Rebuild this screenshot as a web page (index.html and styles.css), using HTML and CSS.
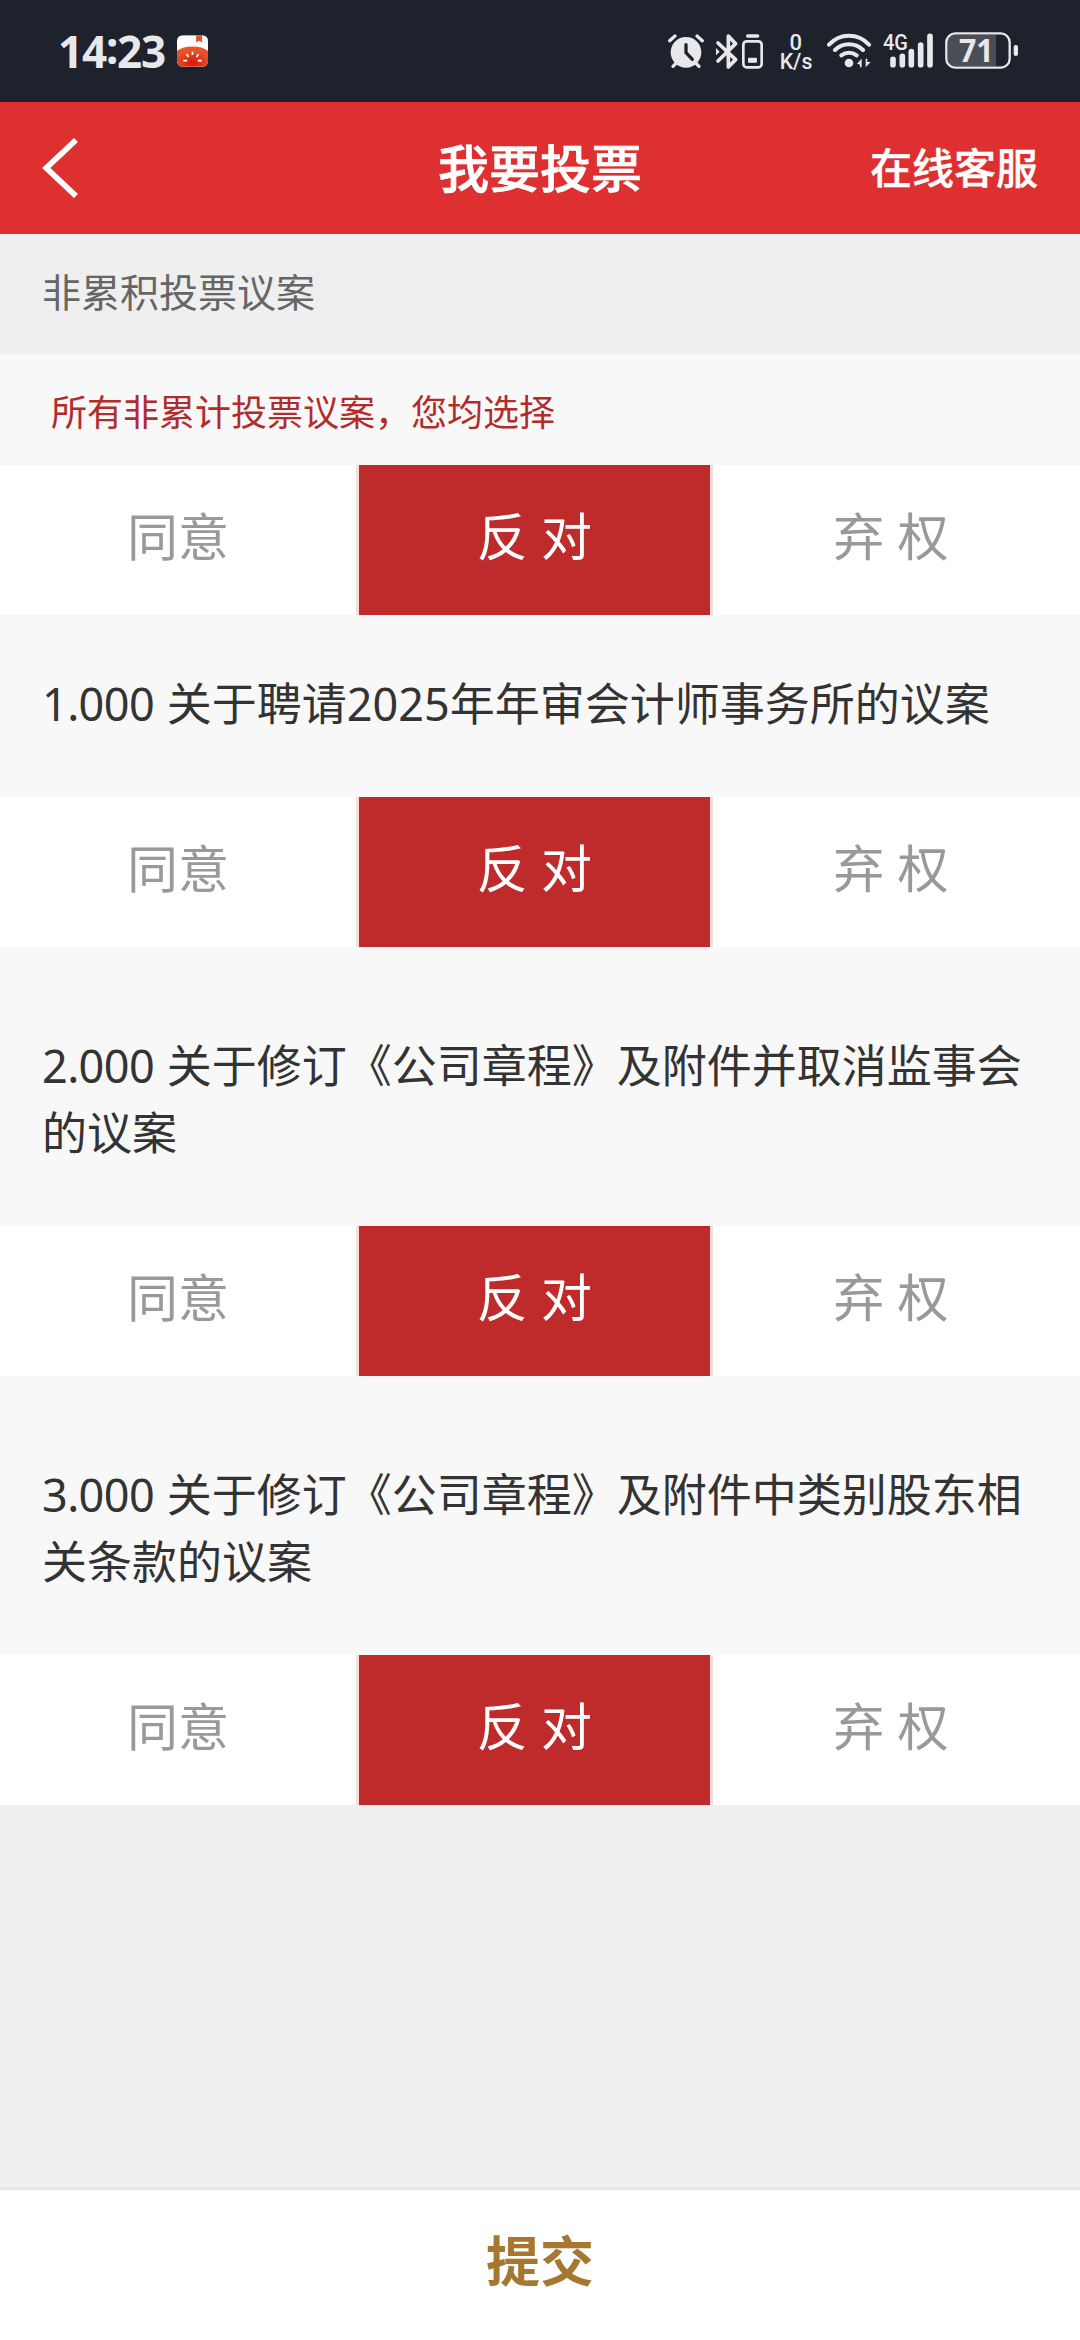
FILE: index.html
```html
<!DOCTYPE html>
<html lang="zh-CN">
<head>
<meta charset="utf-8">
<title>我要投票</title>
<link rel="stylesheet" href="styles.css">
</head>
<body>
<div class="screen">
  <div class="status">
    <div class="status-left">
      <span class="clock">14<span class="colon">:</span>23</span>
      <svg class="app-badge" viewBox="0 0 94 96">
        <defs>
          <clipPath id="badge-clip"><rect width="94" height="96" rx="17"/></clipPath>
          <radialGradient id="tomato" cx=".5" cy=".8" r=".6"><stop offset="0" stop-color="#dc1705"/><stop offset="1" stop-color="#e8532c"/></radialGradient>
        </defs>
        <g clip-path="url(#badge-clip)">
          <rect width="94" height="96" fill="#fff"/>
          <path d="M0 48C22 30 72 30 94 48V96H0Z" fill="url(#tomato)"/>
          <path d="M58 0H76V22L67 17L58 22Z" fill="#de5433"/>
          <path d="M47 50V60M29 57L35 66M65 57L59 66M19 77H31M63 77H75" stroke="#fff" stroke-width="5"/>
        </g>
      </svg>
    </div>
    <div class="status-right">
      <svg class="i-alarm" viewBox="51 0 114 225">
        <path d="M59 77L75 63M141 63L157 77" class="line" stroke-width="10"/>
        <path d="M69 154L80 143M147 154L136 143" class="line" stroke-width="10"/>
        <circle cx="108" cy="112" r="46" class="solid"/>
        <path d="M108 89V113L127 133" fill="none" stroke="#1e222d" stroke-width="10" stroke-linecap="round"/>
      </svg>
      <svg class="i-bt" viewBox="192 0 75 225">
        <path d="M204 84L257 134L235 156V63L257 86L204 138" class="line" stroke-width="11"/>
        <path d="M198 99L209 110L198 121Z" class="solid"/>
      </svg>
      <svg class="i-device" viewBox="273 0 69 225">
        <rect x="280" y="79" width="55" height="78" rx="10" class="line" stroke-width="8"/>
        <path d="M293 63H323" class="line" stroke-width="10"/>
        <rect x="294" y="128" width="27" height="15" rx="3" class="solid"/>
      </svg>
      <svg class="i-speed" viewBox="384 0 108 225">
        <text x="437" y="104" text-anchor="middle" font-size="66">0</text>
        <text x="389" y="161" font-size="64" textLength="98" lengthAdjust="spacingAndGlyphs">K/s</text>
      </svg>
      <svg class="i-wifi" viewBox="-39 0 138 225">
        <path d="M-33 89A80 80 0 0 1 87 89M-15 105A60 60 0 0 1 69 105M4 121A38 38 0 0 1 50 121" class="line" stroke-width="12"/>
        <circle cx="27" cy="144" r="13" class="solid"/>
        <path d="M51 146L65 131V157H60V149ZM77 131V157L92 141H82V131Z" class="solid"/>
      </svg>
      <svg class="i-signal" viewBox="126 0 156 225">
        <text x="129" y="106" font-size="67" textLength="75" lengthAdjust="spacingAndGlyphs">4G</text>
        <path d="M159 133V149M187 124V149M214 110V149M242 90V149M270 64V149" class="line" stroke-width="17"/>
      </svg>
      <svg class="i-battery" viewBox="312 0 228 225">
        <path d="M342 59H468V153H342Q324 153 324 133V79Q324 59 342 59Z" fill="#4c4e57"/>
        <rect x="319" y="55" width="190" height="103" rx="27" class="line" stroke-width="7"/>
        <rect x="521" y="90" width="13" height="33" rx="6" class="solid"/>
        <text class="level" x="357" y="141" font-size="97" textLength="104" lengthAdjust="spacingAndGlyphs">71</text>
      </svg>
    </div>
  </div>

  <header class="navbar">
    <svg class="back" viewBox="0 0 40 64"><path d="M36 4L6.3 32L36 60" fill="none" stroke="#fff" stroke-width="5.8"/></svg>
    <h1 class="nav-title">我要投票</h1>
    <a class="service">在线客服</a>
  </header>

  <div class="section-title">非累积投票议案</div>
  <div class="hint">所有非累计投票议案，您均选择</div>
  <div class="options"><span class="option">同意</span><span class="option selected">反 对</span><span class="option">弃 权</span></div>

  <p class="motion"><span class="number">1.000</span> 关于聘请2025年年审会计师事务所的议案</p>
  <div class="options"><span class="option">同意</span><span class="option selected">反 对</span><span class="option">弃 权</span></div>

  <p class="motion motion-long"><span class="number">2.000</span> 关于修订《公司章程》及附件并取消监事会的议案</p>
  <div class="options"><span class="option">同意</span><span class="option selected">反 对</span><span class="option">弃 权</span></div>

  <p class="motion motion-long"><span class="number">3.000</span> 关于修订《公司章程》及附件中类别股东相关条款的议案</p>
  <div class="options"><span class="option">同意</span><span class="option selected">反 对</span><span class="option">弃 权</span></div>

  <footer class="submit">提交</footer>
</div>
</body>
</html>
```
FILE: styles.css
```css
* { box-sizing: border-box; }

body {
  margin: 0;
  font-family: "Noto Sans", "Noto Sans CJK SC", sans-serif;
}

.screen {
  display: flex;
  flex-direction: column;
  width: 1080px;
  height: 2340px;
  background: #efefef;
  overflow: hidden;
}

/* Status bar */
.status {
  display: flex;
  justify-content: space-between;
  height: 102px;
  padding: 0 60px 0 58px;
  background: #1e222d;
  color: #e8e8ea;
}

.status-left { display: flex; align-items: center; gap: 11px; }

.clock {
  width: 108px;
  font-size: 44px;
  font-weight: 700;
  line-height: 104px;
  letter-spacing: -1.2px;
  white-space: nowrap;
}

.colon { position: relative; top: -4px; }

.app-badge { width: 31px; height: 32px; }

.status-right { display: flex; padding-top: 15px; }

.status-right svg { display: block; height: 75px; }

.status-right text { font-family: Roboto, sans-serif; font-weight: 500; }

.status-right .level { font-family: "Noto Sans", sans-serif; font-weight: 700; }

.line { fill: none; stroke: #e8e8ea; stroke-linecap: round; stroke-linejoin: round; }

.solid, .status-right text { fill: #e8e8ea; }

.i-alarm { width: 38px; margin-right: 9px; }
.i-bt { width: 25px; margin-right: 2px; }
.i-device { width: 23px; margin-right: 14px; }
.i-speed { width: 36px; margin-right: 13px; }
.i-wifi { width: 46px; margin-right: 9px; }
.i-signal { width: 52px; margin-right: 10px; }
.i-battery { width: 76px; }

/* Navigation bar */
.navbar {
  display: grid;
  grid-template-columns: 1fr auto 1fr;
  align-items: center;
  height: 132px;
  padding: 0 42px;
  background: #de3031;
  color: #fff;
}

.back { width: 40px; height: 64px; margin-left: -2px; }

.nav-title {
  margin: 0;
  font-size: 51px;
  font-weight: 500;
  line-height: 132px;
  -webkit-text-stroke: .7px #fff;
}

.service {
  justify-self: end;
  font-size: 42px;
  font-weight: 500;
  line-height: 132px;
  -webkit-text-stroke: .4px #fff;
}

/* Ballot */
.section-title {
  height: 120px;
  padding-left: 42px;
  font-size: 39px;
  line-height: 116px;
  color: #666;
}

.hint {
  height: 111px;
  padding: 6px 0 0 51px;
  background: #f8f8f8;
  font-size: 36px;
  line-height: 105px;
  color: #b12c2b;
}

.options {
  display: grid;
  grid-template-columns: 356px 357px 356px;
  height: 150px;
  background: #fff;
}

.option {
  font-size: 51px;
  line-height: 142px;
  text-align: center;
  color: #999;
}

.selected {
  border: solid #f3dede;
  border-width: 0 3px;
  background: #be2b2a;
  color: #fff;
}

.motion {
  margin: 0;
  padding: 55px 42px 60px;
  background: #f8f8f8;
  font-size: 45px;
  line-height: 67px;
  word-spacing: 1px;
  color: #333;
}

.number { letter-spacing: -.6px; }

.motion-long { padding-top: 85px; }

/* Submit bar */
.submit {
  height: 153px;
  margin-top: auto;
  border-top: 3px solid #e6e6e6;
  background: #fff;
  font-size: 54px;
  font-weight: 700;
  line-height: 143px;
  text-align: center;
  color: #a57730;
}
```
